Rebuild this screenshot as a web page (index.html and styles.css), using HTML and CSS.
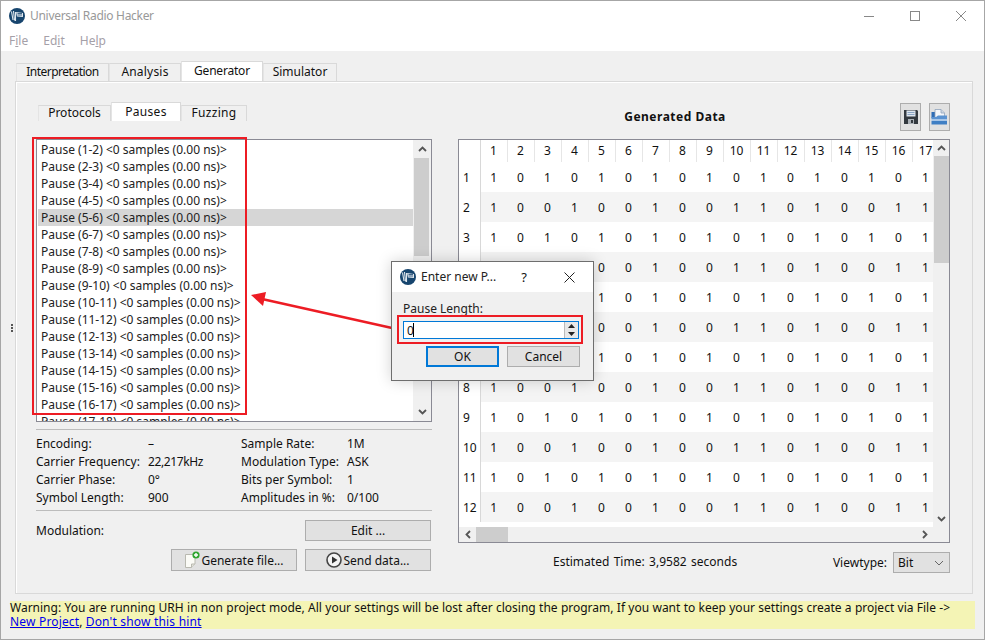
FILE: index.html
```html
<!DOCTYPE html>
<html lang="en">
<head>
    <meta charset="UTF-8">
    <title>Universal Radio Hacker</title>
    <link rel="stylesheet" href="styles.css">
</head>
<body>

<svg class="defs" width="0" height="0">
    <symbol id="logo" viewBox="0 0 16 16">
        <circle cx="8" cy="8" r="8" fill="#17456e"/>
        <path d="M2.5 3.5 L4 12 M4.5 3 L5.5 12.5 M6.5 4 L6.5 13" stroke="#dfe7ee" stroke-width="1.1" fill="none"/>
        <path d="M7 4 L14 5 L14 9 L8 8.5 Z" fill="#dfe7ee"/>
        <path d="M8.5 5.5 H13 M8.5 7 H13" stroke="#17456e" stroke-width="0.8"/>
    </symbol>
    <symbol id="chev-up" viewBox="0 0 9 6"><path d="M1 5 L4.5 1.5 L8 5" fill="none" stroke="#555" stroke-width="1.8"/></symbol>
    <symbol id="chev-down" viewBox="0 0 9 6"><path d="M1 1 L4.5 4.5 L8 1" fill="none" stroke="#555" stroke-width="1.8"/></symbol>
    <symbol id="chev-left" viewBox="0 0 6 9"><path d="M5 1 L1.5 4.5 L5 8" fill="none" stroke="#555" stroke-width="1.8"/></symbol>
    <symbol id="chev-right" viewBox="0 0 6 9"><path d="M1 1 L4.5 4.5 L1 8" fill="none" stroke="#555" stroke-width="1.8"/></symbol>
</svg>

<div class="window">

    <div class="titlebar">
        <svg class="logo"><use href="#logo"/></svg>
        <span class="app-title">Universal Radio Hacker</span>
        <div class="win-buttons">
            <svg width="12" height="12" viewBox="0 0 12 12"><path d="M1 6.5 H11" stroke="#888"/></svg>
            <svg width="12" height="12" viewBox="0 0 12 12"><rect x="1.5" y="1.5" width="9" height="9" fill="none" stroke="#888"/></svg>
            <svg width="12" height="12" viewBox="0 0 12 12"><path d="M1 1 L11 11 M11 1 L1 11" stroke="#888"/></svg>
        </div>
    </div>
    <div class="menubar">
        <span>F<u>i</u>le</span>
        <span>Ed<u>i</u>t</span>
        <span>He<u>l</u>p</span>
    </div>

    <div class="content">
        <div class="main-tabs">
            <div class="tab tab-interp">Interpretation</div>
            <div class="tab tab-analysis">Analysis</div>
            <div class="tab tab-active tab-gen">Generator</div>
            <div class="tab tab-sim">Simulator</div>
        </div>

        <div class="pane">
            <!-- left column -->
            <div class="left">
                <div class="sub-tabs">
                    <div class="tab sub-protocols">Protocols</div>
                    <div class="tab tab-active sub-pauses">Pauses</div>
                    <div class="tab sub-fuzzing">Fuzzing</div>
                </div>

                <div class="listbox">
                    <ul class="pause-list">
                        <li>Pause (1-2) &lt;0 samples (0.00 ns)&gt;</li>
                        <li>Pause (2-3) &lt;0 samples (0.00 ns)&gt;</li>
                        <li>Pause (3-4) &lt;0 samples (0.00 ns)&gt;</li>
                        <li>Pause (4-5) &lt;0 samples (0.00 ns)&gt;</li>
                        <li class="selected">Pause (5-6) &lt;0 samples (0.00 ns)&gt;</li>
                        <li>Pause (6-7) &lt;0 samples (0.00 ns)&gt;</li>
                        <li>Pause (7-8) &lt;0 samples (0.00 ns)&gt;</li>
                        <li>Pause (8-9) &lt;0 samples (0.00 ns)&gt;</li>
                        <li>Pause (9-10) &lt;0 samples (0.00 ns)&gt;</li>
                        <li>Pause (10-11) &lt;0 samples (0.00 ns)&gt;</li>
                        <li>Pause (11-12) &lt;0 samples (0.00 ns)&gt;</li>
                        <li>Pause (12-13) &lt;0 samples (0.00 ns)&gt;</li>
                        <li>Pause (13-14) &lt;0 samples (0.00 ns)&gt;</li>
                        <li>Pause (14-15) &lt;0 samples (0.00 ns)&gt;</li>
                        <li>Pause (15-16) &lt;0 samples (0.00 ns)&gt;</li>
                        <li>Pause (16-17) &lt;0 samples (0.00 ns)&gt;</li>
                        <li>Pause (17-18) &lt;0 samples (0.00 ns)&gt;</li>
                    </ul>
                    <div class="vscroll list-scroll">
                        <div class="sb-arrow"><svg width="9" height="6"><use href="#chev-up"/></svg></div>
                        <div class="thumb list-thumb"></div>
                        <div class="sb-arrow sb-end"><svg width="9" height="6"><use href="#chev-down"/></svg></div>
                    </div>
                </div>

                <div class="info">
                    <span>Encoding:</span><span>–</span><span>Sample Rate:</span><span>1M</span>
                    <span>Carrier Frequency:</span><span class="freq">22,217kHz</span><span>Modulation Type:</span><span>ASK</span>
                    <span>Carrier Phase:</span><span>0°</span><span>Bits per Symbol:</span><span>1</span>
                    <span>Symbol Length:</span><span>900</span><span>Amplitudes in %:</span><span>0/100</span>
                </div>

                <div class="mod-row">
                    <span>Modulation:</span>
                    <button class="btn btn-wide">Edit ...</button>
                </div>
                <div class="action-row">
                    <button class="btn btn-wide">
                        <svg width="16" height="18" viewBox="0 0 16 18">
                            <path d="M1.5 3.5 H11 V13 L7.5 16.5 H1.5 Z" fill="#fbfbf6" stroke="#b9b9b0"/>
                            <path d="M7.5 16.5 V13 H11" fill="#e2e2da" stroke="#b9b9b0"/>
                            <circle cx="12" cy="4" r="3.6" fill="#2fa52f"/>
                            <path d="M12 2 V6 M10 4 H14" stroke="#fff" stroke-width="1.4"/>
                        </svg>
                        Generate file...
                    </button>
                    <button class="btn btn-wide">
                        <svg width="16" height="16" viewBox="0 0 16 16">
                            <circle cx="8" cy="8" r="7" fill="#f4f4f4" stroke="#444" stroke-width="1.6"/>
                            <path d="M6 4.5 L11.5 8 L6 11.5 Z" fill="#333"/>
                        </svg>
                        Send data...
                    </button>
                </div>
            </div>

            <!-- right column -->
            <div class="right">
                <div class="right-head">
                    <h3 class="gen-title">Generated Data</h3>
                    <div class="tool-btns">
                        <div class="tool-btn">
                            <svg width="16" height="16" viewBox="0 0 16 16">
                                <path d="M1 1 H14 L15 2 V15 H1 Z" fill="#33393f"/>
                                <rect x="3.5" y="1.5" width="9" height="6" fill="#dfe6ee"/>
                                <path d="M4.5 3.5 H11.5 M4.5 5.5 H11.5" stroke="#8ba5c4"/>
                                <rect x="5" y="10" width="6" height="5" fill="#aab0b6"/>
                                <rect x="8" y="11" width="2" height="3" fill="#33393f"/>
                            </svg>
                        </div>
                        <div class="tool-btn">
                            <svg width="17" height="16" viewBox="0 0 17 16">
                                <path d="M0.5 3 H4 L5 4.5 V9 H0.5 Z" fill="#2f6db5"/>
                                <path d="M4 0.5 H10 L13.5 4 V9 H4 Z" fill="#f4f6f9" stroke="#8fa3bb" stroke-width="0.8"/>
                                <path d="M10 0.5 V4 H13.5" fill="#cfd8e3" stroke="#8fa3bb" stroke-width="0.8"/>
                                <path d="M0.5 8 L5 8 L7 6.5 H16 V10 H0.5 Z" fill="#5b93d1"/>
                                <path d="M0.5 10 H16 V12 H0.5 Z" fill="#a9c7e8"/>
                                <path d="M0.5 12 H16 V15.5 H0.5 Z" fill="#3f7fc4"/>
                            </svg>
                        </div>
                    </div>
                </div>

                <div class="table-box">
                    <div class="table-clip">
                        <table class="bits">
                            <thead>
                                <tr><th></th><th>1</th><th>2</th><th>3</th><th>4</th><th>5</th><th>6</th><th>7</th><th>8</th><th>9</th><th>10</th><th>11</th><th>12</th><th>13</th><th>14</th><th>15</th><th>16</th><th>17</th></tr>
                            </thead>
                            <tbody>
                                <tr><th>1</th><td>1</td><td>0</td><td>1</td><td>0</td><td>1</td><td>0</td><td>1</td><td>0</td><td>1</td><td>0</td><td>1</td><td>0</td><td>1</td><td>0</td><td>1</td><td>0</td><td>1</td></tr>
                                <tr><th>2</th><td>1</td><td>0</td><td>0</td><td>1</td><td>0</td><td>0</td><td>1</td><td>0</td><td>0</td><td>1</td><td>1</td><td>0</td><td>1</td><td>0</td><td>0</td><td>1</td><td>1</td></tr>
                                <tr><th>3</th><td>1</td><td>0</td><td>1</td><td>0</td><td>1</td><td>0</td><td>1</td><td>0</td><td>1</td><td>0</td><td>1</td><td>0</td><td>1</td><td>0</td><td>1</td><td>0</td><td>1</td></tr>
                                <tr><th>4</th><td>1</td><td>0</td><td>0</td><td>1</td><td>0</td><td>0</td><td>1</td><td>0</td><td>0</td><td>1</td><td>1</td><td>0</td><td>1</td><td>0</td><td>0</td><td>1</td><td>1</td></tr>
                                <tr><th>5</th><td>1</td><td>0</td><td>1</td><td>0</td><td>1</td><td>0</td><td>1</td><td>0</td><td>1</td><td>0</td><td>1</td><td>0</td><td>1</td><td>0</td><td>1</td><td>0</td><td>1</td></tr>
                                <tr><th>6</th><td>1</td><td>0</td><td>0</td><td>1</td><td>0</td><td>0</td><td>1</td><td>0</td><td>0</td><td>1</td><td>1</td><td>0</td><td>1</td><td>0</td><td>0</td><td>1</td><td>1</td></tr>
                                <tr><th>7</th><td>1</td><td>0</td><td>1</td><td>0</td><td>1</td><td>0</td><td>1</td><td>0</td><td>1</td><td>0</td><td>1</td><td>0</td><td>1</td><td>0</td><td>1</td><td>0</td><td>1</td></tr>
                                <tr><th>8</th><td>1</td><td>0</td><td>0</td><td>1</td><td>0</td><td>0</td><td>1</td><td>0</td><td>0</td><td>1</td><td>1</td><td>0</td><td>1</td><td>0</td><td>0</td><td>1</td><td>1</td></tr>
                                <tr><th>9</th><td>1</td><td>0</td><td>1</td><td>0</td><td>1</td><td>0</td><td>1</td><td>0</td><td>1</td><td>0</td><td>1</td><td>0</td><td>1</td><td>0</td><td>1</td><td>0</td><td>1</td></tr>
                                <tr><th>10</th><td>1</td><td>0</td><td>0</td><td>1</td><td>0</td><td>0</td><td>1</td><td>0</td><td>0</td><td>1</td><td>1</td><td>0</td><td>1</td><td>0</td><td>0</td><td>1</td><td>1</td></tr>
                                <tr><th>11</th><td>1</td><td>0</td><td>1</td><td>0</td><td>1</td><td>0</td><td>1</td><td>0</td><td>1</td><td>0</td><td>1</td><td>0</td><td>1</td><td>0</td><td>1</td><td>0</td><td>1</td></tr>
                                <tr><th>12</th><td>1</td><td>0</td><td>0</td><td>1</td><td>0</td><td>0</td><td>1</td><td>0</td><td>0</td><td>1</td><td>1</td><td>0</td><td>1</td><td>0</td><td>0</td><td>1</td><td>1</td></tr>
                            </tbody>
                        </table>
                    </div>
                    <div class="vscroll table-scroll">
                        <div class="sb-arrow"><svg width="9" height="6"><use href="#chev-up"/></svg></div>
                        <div class="thumb table-thumb"></div>
                        <div class="sb-arrow sb-end"><svg width="9" height="6"><use href="#chev-down"/></svg></div>
                    </div>
                    <div class="hscroll">
                        <div class="sb-arrow-h"><svg width="6" height="9"><use href="#chev-left"/></svg></div>
                        <div class="thumb-h"></div>
                        <div class="sb-arrow-h sb-end-h"><svg width="6" height="9"><use href="#chev-right"/></svg></div>
                    </div>
                    <div class="corner"></div>
                </div>

                <div class="right-foot">
                    <span class="est-time">Estimated Time: 3,9582 seconds</span>
                    <span class="view-label">Viewtype:</span>
                    <div class="combo">
                        <span>Bit</span>
                        <svg width="10" height="6" viewBox="0 0 10 6"><path d="M1 1 L5 5 L9 1" fill="none" stroke="#666"/></svg>
                    </div>
                </div>
            </div>
        </div>

        <div class="warning">Warning: You are running URH in non project mode, All your settings will be lost after closing the program, If you want to keep your settings create a project via File -&gt;<br><a href="#">New Project</a>, <a href="#">Don't show this hint</a></div>
    </div>

    <div class="grip"><i></i><i></i><i></i></div>

    <!-- annotations on top of the screenshot -->
    <div class="mark mark-list"></div>
    <svg class="arrow" width="150" height="40" viewBox="250 292 150 40">
        <path d="M262 299 L392 328" stroke="#ed1c24" stroke-width="2.4"/>
        <path d="M251 295 L266 292 L263 306 Z" fill="#ed1c24"/>
    </svg>

    <div class="dialog">
        <div class="dlg-title">
            <svg class="dlg-logo"><use href="#logo"/></svg>
            <span class="dlg-name">Enter new P...</span>
            <span class="dlg-help">?</span>
            <svg width="11" height="11" viewBox="0 0 11 11"><path d="M0.5 0.5 L10.5 10.5 M10.5 0.5 L0.5 10.5" stroke="#222"/></svg>
        </div>
        <div class="dlg-body">
            <div class="dlg-label">Pause Length:</div>
            <div class="spin">
                <span class="spin-value">0</span><span class="caret"></span>
                <div class="spin-btns">
                    <svg width="7" height="4" viewBox="0 0 7 4"><path d="M0 4 L3.5 0 L7 4 Z" fill="#222"/></svg>
                    <svg width="7" height="4" viewBox="0 0 7 4"><path d="M0 0 L3.5 4 L7 0 Z" fill="#222"/></svg>
                </div>
            </div>
            <div class="dlg-btns">
                <button class="btn dlg-btn dlg-ok">OK</button>
                <button class="btn dlg-btn">Cancel</button>
            </div>
        </div>
        <div class="mark mark-spin"></div>
    </div>

</div>

</body>
</html>
```

FILE: styles.css
```css
* {
    box-sizing: border-box;
}
html, body {
    margin: 0;
    padding: 0;
}
body {
    font-family: "Noto Sans", "Liberation Sans", sans-serif;
    font-size: 12px;
    color: #111;
    background: #f0f0f0;
    overflow: hidden;
}
.defs {
    position: absolute;
}
.window {
    position: relative;
    width: 985px;
    height: 640px;
    border: 1px solid #a6a6a6;
    background: #f0f0f0;
    display: flex;
    flex-direction: column;
    overflow: hidden;
}

/* title + menu */
.titlebar {
    height: 30px;
    background: #fff;
    display: flex;
    align-items: center;
    padding-left: 8px;
    flex: none;
}
.logo {
    width: 16px;
    height: 16px;
}
.app-title {
    margin-left: 5px;
    margin-top: -2px;
    color: #999;
    letter-spacing: -0.3px;
}
.win-buttons {
    margin-left: auto;
    display: flex;
    gap: 34px;
    padding-right: 17px;
}
.menubar {
    height: 20px;
    background: #fff;
    display: flex;
    gap: 15px;
    padding-left: 8px;
    color: #a5a0a8;
    flex: none;
    line-height: 20px;
}

/* tabs */
.content {
    flex: 1;
    padding: 10px 0 0 14px;
    min-height: 0;
}
.main-tabs, .sub-tabs {
    display: flex;
    align-items: flex-end;
}
.main-tabs {
    height: 20px;
    padding-left: 1px;
}
.tab {
    width: 93px;
    height: 18px;
    background: #f0f0f0;
    border: 1px solid #d9d9d9;
    border-bottom: none;
    border-left-color: #e4e4e4;
    text-align: center;
    line-height: 15px;
    color: #111;
}
.tab-interp { letter-spacing: -0.5px; }
.tab-analysis { width: 72px; letter-spacing: 0.2px; }
.tab-gen { width: 82px; letter-spacing: -0.2px; }
.tab-sim { width: 74px; }
.tab-active {
    height: 20px;
    background: #fff;
    line-height: 17px;
    padding-bottom: 2px;
}
.pane {
    width: 958px;
    height: 513px;
    border: 1px solid #d9d9d9;
    box-shadow: inset 1px 1px 0 #fff;
    padding: 20px 0 0 20px;
    display: grid;
    grid-template-columns: 396px 492px;
    column-gap: 26px;
    align-content: start;
}

/* left column */
.sub-tabs {
    height: 19px;
    padding-left: 2px;
}
.sub-protocols { width: 73px; height: 16px; line-height: 13px; }
.sub-pauses { width: 70px; height: 19px; line-height: 17px; letter-spacing: 0.3px; }
.sub-fuzzing { width: 66px; height: 16px; line-height: 13px; letter-spacing: 0.3px; }
.listbox {
    margin-top: 18px;
    height: 283px;
    border: 1px solid #8a8a94;
    background: #fff;
    display: flex;
}
.pause-list {
    list-style: none;
    margin: 0;
    padding: 1px 0 0 1px;
    flex: 1;
    overflow: hidden;
}
.pause-list li {
    height: 17px;
    line-height: 17px;
    padding-left: 3px;
    white-space: nowrap;
    color: #222;
}
.pause-list .selected {
    background: #d6d6d6;
}
.vscroll {
    flex: none;
    display: flex;
    flex-direction: column;
    background: #f0f0f0;
}
.list-scroll {
    width: 18px;
}
.table-scroll {
    width: 16px;
}
.sb-arrow {
    height: 16px;
    padding-left: 1px;
    display: flex;
    align-items: center;
    justify-content: center;
    flex: none;
}
.list-scroll .sb-arrow {
    height: 18px;
    padding-right: 1px;
}
.sb-end {
    margin-top: auto;
}
.thumb {
    width: 15px;
    margin-left: 1px;
    background: #cdcdcd;
}
.list-thumb { height: 98px; }
.table-thumb { height: 107px; }

.info {
    margin-top: 7px;
    border-top: 1px solid #bcbcbc;
    border-bottom: 1px solid #bcbcbc;
    height: 82px;
    padding-top: 5px;
    display: grid;
    grid-template-columns: 112px 93px 106px 1fr;
    grid-auto-rows: 18px;
    line-height: 18px;
    white-space: nowrap;
}
.freq {
    letter-spacing: -0.4px;
}
.mod-row {
    margin-top: 9px;
    display: flex;
    justify-content: space-between;
    align-items: center;
    padding-right: 1px;
}
.action-row {
    margin-top: 8px;
    display: flex;
    justify-content: flex-end;
    gap: 8px;
    padding-right: 1px;
}
.btn {
    font: inherit;
    color: #111;
    background: #e1e1e1;
    border: 1px solid #adadad;
    padding: 0;
    display: flex;
    align-items: center;
    justify-content: center;
    gap: 1px;
}
.btn-wide {
    width: 126px;
    height: 21px;
}
.action-row .btn-wide {
    height: 22px;
}

/* right column */
.right-head {
    height: 37px;
    display: flex;
    justify-content: flex-end;
    gap: 8px;
    padding-top: 1px;
}
.gen-title {
    margin: 0;
    font-size: 12px;
    font-weight: bold;
    flex: 1;
    text-align: center;
    padding-top: 5px;
    letter-spacing: 0.5px;
}
.tool-btns {
    display: flex;
    gap: 8px;
    flex: none;
}
.tool-btn {
    width: 21px;
    height: 28px;
    border: 1px solid #adadad;
    background: #e1e1e1;
    display: flex;
    align-items: center;
    justify-content: center;
}
.table-box {
    height: 404px;
    border: 1px solid #8a8a94;
    background: #f0f0f0;
    display: grid;
    grid-template-columns: 474px 16px;
    grid-template-rows: 387px 15px;
}
.table-clip {
    overflow: hidden;
    background: #fff;
}
.bits {
    border-collapse: collapse;
    table-layout: fixed;
    width: 480px;
}
.bits th, .bits td {
    padding: 0;
    font-weight: normal;
    text-align: center;
    color: #111;
}
.bits thead th {
    height: 22px;
    width: 27px;
    padding-bottom: 2px;
    border-right: 1px solid #e6e6e6;
    background: #fff;
}
.bits thead th:first-child {
    width: 21px;
    border-right: 1px solid #d8d8d8;
}
.bits tbody th {
    height: 30px;
    padding-left: 4px;
    text-align: left;
    border-right: 1px solid #d8d8d8;
    background: #fff;
}
.bits tbody tr:nth-child(even) td {
    background: #f4f4f4;
}
.hscroll {
    display: flex;
    align-items: stretch;
    background: #f0f0f0;
}
.sb-arrow-h {
    width: 17px;
    display: flex;
    align-items: center;
    justify-content: center;
    flex: none;
}
.sb-end-h {
    margin-left: auto;
}
.thumb-h {
    width: 32px;
    background: #cdcdcd;
}
.right-foot {
    margin-top: 9px;
    height: 21px;
    display: flex;
    align-items: center;
}
.est-time {
    margin-left: 95px;
    padding-bottom: 3px;
    word-spacing: 1.3px;
}
.view-label {
    margin-left: auto;
}
.combo {
    margin-left: 6px;
    width: 57px;
    height: 21px;
    border: 1px solid #adadad;
    background: #e1e1e1;
    display: flex;
    align-items: center;
    justify-content: space-between;
    padding: 0 5px 0 4px;
}

/* warning */
.warning {
    margin: 7px 0 0 -5px;
    width: 965px;
    height: 28px;
    background: #f4f4b5;
    line-height: 14px;
    white-space: nowrap;
    word-spacing: 0.2px;
}
.warning a {
    color: #0000ee;
    letter-spacing: 0.15px;
}

/* overlays */
.grip {
    position: absolute;
    left: 10px;
    top: 323px;
    display: flex;
    flex-direction: column;
    gap: 1px;
}
.grip i {
    display: block;
    width: 2px;
    height: 2px;
    background: #555;
}
.mark {
    position: absolute;
    border: 2px solid #ed1c24;
    pointer-events: none;
}
.mark-list {
    left: 31px;
    top: 136px;
    width: 215px;
    height: 278px;
}
.arrow {
    position: absolute;
    left: 249px;
    top: 291px;
}
.dialog {
    position: absolute;
    left: 390px;
    top: 260px;
    width: 203px;
    height: 120px;
    border: 1px solid #6e6e6e;
    background: #f0f0f0;
    box-shadow: 0 0 14px rgba(0, 0, 0, 0.18);
}
.dlg-title {
    height: 30px;
    background: #fff;
    display: flex;
    align-items: center;
    padding: 0 18px 0 8px;
}
.dlg-logo {
    width: 16px;
    height: 16px;
}
.dlg-name {
    margin-left: 5px;
    margin-top: -1px;
    color: #222;
}
.dlg-help {
    margin-left: auto;
    margin-right: 37px;
    font-size: 13px;
}
.dlg-body {
    padding: 8px 13px 0 11px;
}
.dlg-label {
    height: 18px;
    line-height: 18px;
    color: #222;
}
.spin {
    height: 18px;
    border: 1px solid #0078d7;
    background: #fff;
    display: flex;
    align-items: center;
    padding-left: 3px;
    width: 176px;
    margin-top: 3px;
}
.caret {
    width: 1px;
    height: 14px;
    margin-left: -1px;
    background: #000;
}
.spin-btns {
    margin-left: auto;
    width: 14px;
    height: 16px;
    background: #e8e8e8;
    border-left: 1px solid #bbb;
    display: flex;
    flex-direction: column;
    align-items: center;
    justify-content: space-between;
    padding: 2px 0;
}
.dlg-btns {
    margin-top: 7px;
    display: flex;
    justify-content: flex-end;
    gap: 8px;
}
.dlg-btn {
    width: 73px;
    height: 21px;
}
.dlg-ok {
    border: 2px solid #0078d7;
}
.mark-spin {
    left: 5px;
    top: 53px;
    width: 186px;
    height: 29px;
}
```
